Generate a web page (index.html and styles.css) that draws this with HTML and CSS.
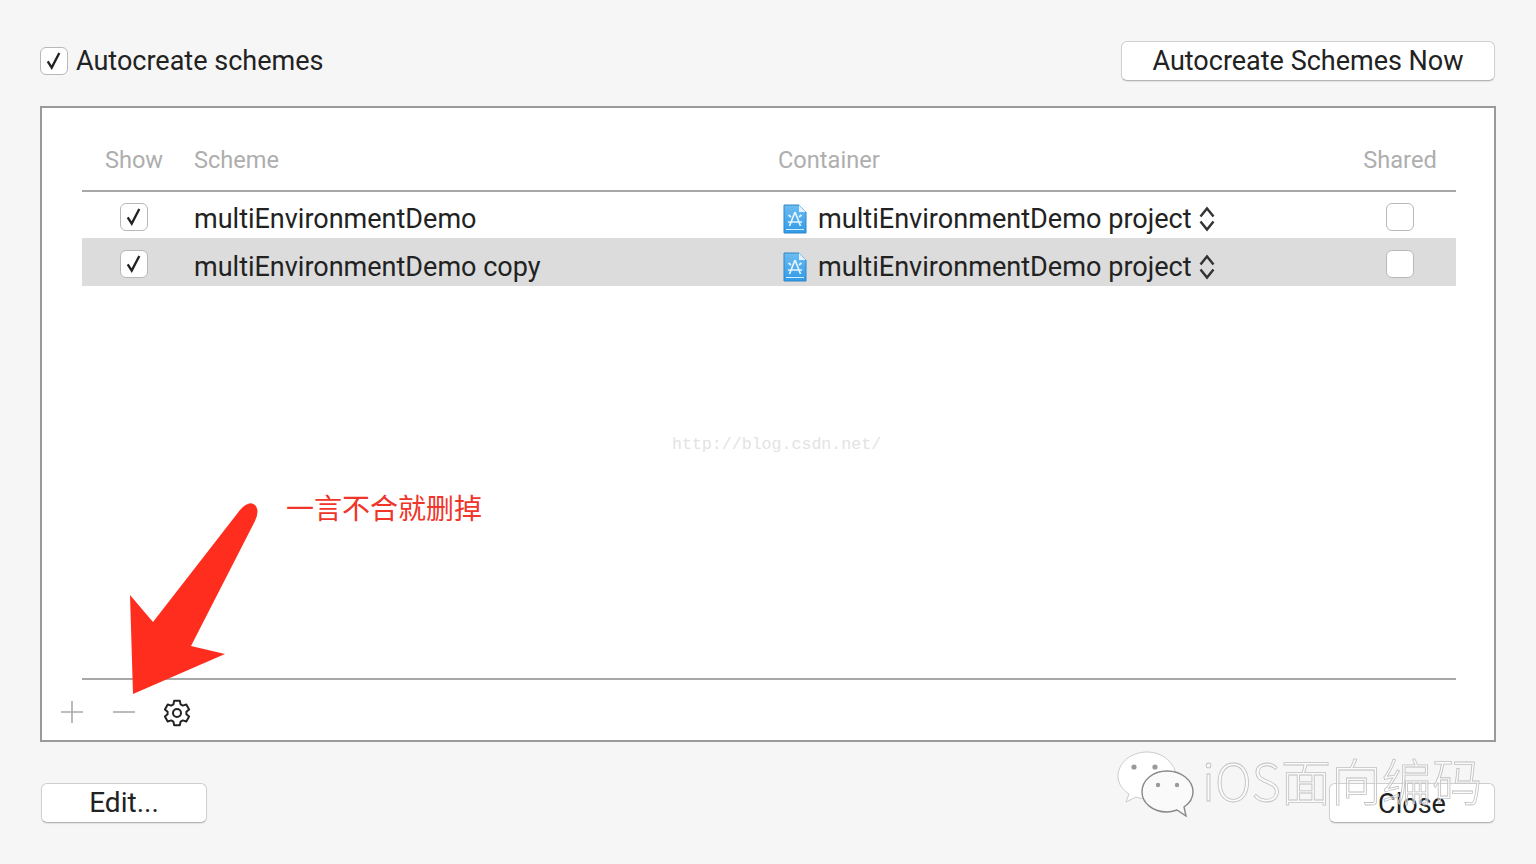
FILE: index.html
```html
<!DOCTYPE html>
<html lang="en">
<head>
<meta charset="utf-8">
<title>Manage Schemes</title>
<link rel="stylesheet" href="styles.css">
</head>
<body>
<svg class="defs" width="0" height="0" aria-hidden="true">
  <defs>
    <linearGradient id="fileFill" x1="0" y1="0" x2="0" y2="1"><stop offset="0" stop-color="#6dbcf0"/><stop offset="1" stop-color="#2f9be8"/></linearGradient>
    <symbol id="check" viewBox="0 0 28 28"><path d="M7.5 15 L12 22 L20.5 5.5" fill="none" stroke="#222" stroke-width="2.6"/></symbol>
    <symbol id="file" viewBox="0 0 24 30">
      <path d="M1 1H16L23 8V29H1Z" fill="url(#fileFill)" stroke="#2f86c8"/>
      <path d="M16 1V8H23Z" fill="#e2f1fb"/>
      <path d="M3 25.5H21" stroke="#d6ecfb" stroke-width="1"/>
      <path d="M12 8L6.5 22M12 8L17.5 22M5 18H19M8 13L5.5 11M16 13L18.5 11" stroke="#e4f3fd" stroke-width="1.7" fill="none"/>
    </symbol>
    <symbol id="updown" viewBox="0 0 16 26"><path d="M1.5 10.5L8 2.5L14.5 10.5M1.5 15.5L8 23.5L14.5 15.5" fill="none" stroke="#333" stroke-width="2.4"/></symbol>
  </defs>
</svg>
<main class="window">
  <header class="top-row">
    <label class="auto-label"><span class="box"><svg class="tick"><use href="#check"/></svg></span><span class="auto-text">Autocreate schemes</span></label>
    <button class="btn btn-now">Autocreate Schemes Now</button>
  </header>

  <section class="panel">
    <div class="table">
      <div class="row head">
        <div class="c-show">Show</div>
        <div class="c-scheme">Scheme</div>
        <div class="c-container">Container</div>
        <div class="c-shared">Shared</div>
      </div>
      <div class="row body-row">
        <div class="c-show"><span class="box"><svg class="tick"><use href="#check"/></svg></span></div>
        <div class="c-scheme">multiEnvironmentDemo</div>
        <div class="c-container"><svg class="file"><use href="#file"/></svg><span class="proj">multiEnvironmentDemo project</span><svg class="updown"><use href="#updown"/></svg></div>
        <div class="c-shared"><span class="box"></span></div>
      </div>
      <div class="row body-row selected">
        <div class="c-show"><span class="box"><svg class="tick"><use href="#check"/></svg></span></div>
        <div class="c-scheme">multiEnvironmentDemo copy</div>
        <div class="c-container"><svg class="file"><use href="#file"/></svg><span class="proj">multiEnvironmentDemo project</span><svg class="updown"><use href="#updown"/></svg></div>
        <div class="c-shared"><span class="box"></span></div>
      </div>
    </div>
    <div class="tools">
      <svg class="tool" viewBox="0 0 24 24"><path d="M12 1V23M1 12H23" stroke="#aaa" stroke-width="1.6"/></svg>
      <svg class="tool" viewBox="0 0 24 24"><path d="M1 12H23" stroke="#aaa" stroke-width="1.6"/></svg>
      <svg class="tool gear" viewBox="0 0 28 28"><path d="M11.2 1.8H16.8L17.6 5.4L19.8 6.6L23.3 5.5L26.1 10.4L23.4 12.8V15.2L26.1 17.6L23.3 22.5L19.8 21.4L17.6 22.6L16.8 26.2H11.2L10.4 22.6L8.2 21.4L4.7 22.5L1.9 17.6L4.6 15.2V12.8L1.9 10.4L4.7 5.5L8.2 6.6L10.4 5.4Z" fill="none" stroke="#222" stroke-width="2" stroke-linejoin="round"/><circle cx="14" cy="14" r="4" fill="none" stroke="#222" stroke-width="2"/></svg>
    </div>
  </section>

  <footer class="bottom-row">
    <button class="btn btn-edit">Edit...</button>
    <button class="btn btn-close">Close</button>
  </footer>
</main>

<div class="csdn">http://blog.csdn.net/</div>
<div class="note">一言不合就删掉</div>
<svg class="arrow" viewBox="0 0 130 210"><path d="M0 105L23 132L110 20Q119 10 125 15Q130 20 125 31L61 156L95 164L3 204Z" fill="#ff2d1e"/></svg>
<div class="mark">
  <svg class="wechat" viewBox="0 0 78 66">
    <path d="M30 1C14 1 1 12 1 25C1 33 6 39 12 43L9 51L19 46C24 48 30 48 34 47L60 27C58 12 46 1 30 1Z" fill="#fff" stroke="#ccc"/>
    <path d="M50 20C36 20 25 29 25 41C25 52 36 61 50 61C54 61 57 60 60 59L69 65L67 56C73 52 76 47 76 41C76 29 64 20 50 20Z" fill="#fafafa" stroke="#888" stroke-width="1.4"/>
    <circle cx="17" cy="16" r="2.6" fill="#999"/><circle cx="38" cy="16" r="2.6" fill="#999"/>
    <circle cx="41" cy="34" r="2.2" fill="#999"/><circle cx="60" cy="34" r="2.2" fill="#999"/>
  </svg>
  <span class="mark-text">iOS面向编码</span>
</div>
</body>
</html>
```
FILE: styles.css
```css
* { box-sizing: border-box; }
html, body { margin: 0; height: 100%; }
body {
  background: #f6f6f6;
  font-family: Roboto, "Liberation Sans", sans-serif;
  font-size: 27px;
  color: #222;
  position: relative;
  overflow: hidden;
}
.defs { position: absolute; }
.window { padding: 41px 40px 0; display: flex; flex-direction: column; }
.top-row { display: flex; justify-content: space-between; align-items: center; height: 40px; }
.auto-label { display: flex; align-items: center; gap: 9px; }
.auto-text { margin-left: -1px; }
.box {
  display: inline-block;
  width: 28px;
  height: 28px;
  background: #fff;
  border: 1.5px solid #b8b8b8;
  border-radius: 6px;
  vertical-align: top;
}
.tick { display: block; width: 25px; height: 25px; }
.btn {
  font: inherit;
  color: #222;
  height: 40px;
  background: #fff;
  border: 1px solid #cfcfcf;
  border-bottom-color: #b5b5b5;
  border-radius: 6px;
  padding: 0;
  box-shadow: 0 1px 1px rgba(0,0,0,.08);
}
.btn-now { width: 374px; margin-right: 1px; }
.panel {
  margin-top: 25px;
  height: 636px;
  background: #fff;
  border: 2px solid #9a9a9a;
  display: flex;
  flex-direction: column;
  padding: 0 38px 0 40px;
}
.table { flex: 1; border-bottom: 2px solid #a8a8a8; }
.row { display: flex; align-items: center; }
.head { height: 84px; padding-top: 22px; border-bottom: 2px solid #a8a8a8; color: #aeaeae; font-size: 23.6px; }
.body-row { height: 46px; padding-top: 8px; }
.selected { height: 48px; padding-top: 10px; background: #dcdcdc; }
.c-show { width: 112px; text-align: center; padding-right: 8px; }
.c-scheme { width: 584px; }
.c-container { width: 560px; display: flex; align-items: center; }
.file { width: 24px; height: 30px; margin-left: 5px; margin-right: 11px; flex: none; }
.proj { white-space: nowrap; font-size: 27.1px; }
.updown { width: 16px; height: 26px; margin-left: 7px; flex: none; }
.c-shared { width: 118px; text-align: center; padding-left: 6px; }
.body-row .c-show, .body-row .c-shared { align-self: stretch; margin-top: 3px; }
.selected .c-show, .selected .c-shared { margin-top: 2px; }
.tools { height: 60px; margin: 0 -18px 0 -22px; padding-top: 4px; display: flex; align-items: center; gap: 28px; }
.tool { width: 24px; height: 24px; flex: none; }
.gear { width: 28px; height: 28px; margin-left: -1px; margin-top: 2px; }
.bottom-row { display: flex; justify-content: space-between; margin-top: 41px; padding: 0 1px; }
.btn-edit { width: 166px; font-size: 28px; padding-bottom: 1px; }
.btn-close { width: 166px; padding-top: 1px; }
.csdn {
  position: absolute;
  left: 672px;
  top: 435px;
  font: 16.6px "Liberation Mono", monospace;
  color: #e3e3e3;
}
.note {
  position: absolute;
  left: 286px;
  top: 487px;
  font: 28px "Noto Sans CJK SC", sans-serif;
  color: #f0362a;
}
.arrow { position: absolute; left: 130px; top: 490px; width: 130px; height: 210px; }
.mark { position: absolute; left: 1117px; top: 751px; display: flex; align-items: flex-start; gap: 7px; }
.wechat { width: 78px; height: 66px; flex: none; }
.mark-text {
  font: 200 50.4px "Noto Sans CJK SC", sans-serif;
  line-height: 58px;
  color: rgba(255,255,255,.5);
  -webkit-text-stroke: .8px #c0c0c0;
  white-space: nowrap;
}
```
